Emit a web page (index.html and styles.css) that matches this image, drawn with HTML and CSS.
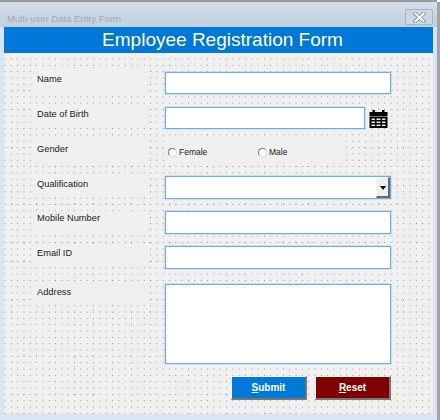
FILE: index.html
```html
<!DOCTYPE html>
<html lang="en">
<head>
  <meta charset="UTF-8">
  <title>Employee Registration Form</title>
  <link rel="stylesheet" href="styles.css">
</head>
<body>

  <div class="window">
    <div class="titlebar">
      <span class="window-title">Multi-user Data Entry Form</span>
      <button class="btn-close" type="button" aria-label="Close">
        <svg width="13" height="11" viewBox="0 0 13 11">
          <path d="M2 1.5 L11 9.5 M11 1.5 L2 9.5" stroke="#7f8a98" stroke-width="3.6" stroke-linecap="square" fill="none"/>
          <path d="M2 1.5 L11 9.5 M11 1.5 L2 9.5" stroke="#fff" stroke-width="2" stroke-linecap="square" fill="none"/>
        </svg>
      </button>
    </div>

    <h1 class="banner">Employee Registration Form</h1>

    <form class="panel">
      <div class="row">
        <label class="field-label">Name</label>
        <input class="text-input offset-2" type="text">
      </div>

      <div class="row">
        <label class="field-label">Date of Birth</label>
        <input class="text-input offset-2 short" type="text">
        <svg class="calendar" width="19" height="19" viewBox="0 0 19 19">
          <path d="M0.5 3 H18.5 V7 H0.5 Z" fill="#000"/>
          <path d="M3.5 1 H6 V4 H3.5 Z M13 1 H15.5 V4 H13 Z" fill="#000"/>
          <path d="M0.5 7.5 H18.5 V19 H0.5 Z" fill="#000"/>
          <path d="M2.5 9.5 H6 V11 H2.5 Z M7.5 9.5 H11.5 V11 H7.5 Z M13 9.5 H16.5 V11 H13 Z M2.5 12.5 H6 V14 H2.5 Z M7.5 12.5 H11.5 V14 H7.5 Z M13 12.5 H16.5 V14 H13 Z M2.5 15.5 H6 V17 H2.5 Z M7.5 15.5 H11.5 V17 H7.5 Z M13 15.5 H16.5 V17 H13 Z" fill="#e8e8e8"/>
        </svg>
      </div>

      <div class="row row-gender">
        <label class="field-label">Gender</label>
        <div class="radio-group">
          <label class="radio"><input type="radio" name="gender">Female</label>
          <label class="radio"><input type="radio" name="gender">Male</label>
        </div>
      </div>

      <div class="row">
        <label class="field-label thin first-thin">Qualification</label>
        <div class="combo">
          <button class="combo-btn" type="button" aria-label="Open"></button>
        </div>
      </div>

      <div class="row">
        <label class="field-label thin">Mobile Number</label>
        <input class="text-input tall" type="text">
      </div>

      <div class="row">
        <label class="field-label thin">Email ID</label>
        <input class="text-input tall" type="text">
      </div>

      <div class="row address-row">
        <label class="field-label address-label">Address</label>
        <textarea class="text-input address"></textarea>
      </div>

      <div class="actions">
        <button class="btn btn-submit" type="button"><u>S</u>ubmit</button>
        <button class="btn btn-reset" type="button"><u>R</u>eset</button>
      </div>
    </form>
  </div>

</body>
</html>
```

FILE: styles.css
```css
html, body {
  margin: 0;
  height: 420px;
  overflow: hidden;
  background: #fff;
}

body {
  font-family: "Liberation Sans", Arial, sans-serif;
  font-size: 9.3px;
  color: #222;
}

.window {
  box-sizing: border-box;
  width: 437px;
  height: 420px;
  margin-top: 2px;
  padding: 0 4px;
  background: #d9e5f2;
  box-shadow: 0 -2px 0 #9a9a9a, 3px 0 0 #a4a4a4;
}

.titlebar {
  display: flex;
  align-items: center;
  justify-content: space-between;
  height: 25px;
  margin: 0 -4px;
  padding: 0 4px 0 7px;
  background: linear-gradient(#d4deea, #c0cfdf);
}

.window-title {
  color: #a0a9b4;
  font-size: 9.5px;
  margin-top: 7px;
}

.btn-close {
  display: flex;
  align-items: center;
  justify-content: center;
  box-sizing: border-box;
  width: 28px;
  height: 16px;
  margin-top: 5px;
  padding: 0;
  background: #ccd7e4;
  border: 1px solid #a6b3c4;
  border-radius: 2px;
}

.banner {
  box-sizing: border-box;
  height: 26px;
  margin: 0;
  padding-left: 8px;
  background: #0078d7;
  color: #ffffcc;
  font-size: 19px;
  font-weight: normal;
  line-height: 25px;
  text-align: center;
}

.panel {
  box-sizing: border-box;
  height: 361px;
  padding-top: 17px;
  background-color: #f0f0f0;
  background-image: radial-gradient(circle, #8c8c8c 0.5px, transparent 0.8px);
  background-size: 6.33px 6.33px;
  background-position: -2.2px 2.8px;
}

.row {
  display: flex;
  align-items: flex-start;
  height: 35px;
  padding-left: 28px;
}

.row-gender {
  height: 36px;
}

.field-label {
  box-sizing: border-box;
  flex: none;
  width: 114px;
  height: 23px;
  margin-right: 19px;
  padding: 2px 0 0 5px;
  background: #f0f0f0;
  line-height: 14px;
}

.field-label.thin {
  height: 20px;
  padding-top: 0;
}

.field-label.first-thin {
  padding-top: 1px;
}

.text-input {
  box-sizing: border-box;
  display: block;
  width: 226px;
  height: 22px;
  margin: 0;
  padding: 0;
  background: #fff;
  border: 1px solid #6db0e8;
  box-shadow: 0 0 0 0.5px #a9d0f0;
  border-radius: 0;
  outline: none;
  resize: none;
}

.offset-2 {
  margin-top: 2px;
}

.short {
  width: 200px;
}

.tall {
  height: 23px;
}

.calendar {
  flex: none;
  margin: 4px 0 0 4px;
}

.radio-group {
  display: flex;
  width: 180px;
  height: 23px;
  background: #f0f0f0;
}

.radio {
  display: flex;
  align-items: center;
  width: 92px;
  padding: 1px 0 0 3px;
  box-sizing: border-box;
  height: 23px;
  font-size: 8.5px;
}

.radio input {
  appearance: none;
  box-sizing: border-box;
  flex: none;
  width: 9px;
  height: 9px;
  margin: 0 2px 0 0;
  background: #fff;
  border: 1px solid;
  border-color: #777 #ddd #ddd #777;
  border-radius: 50%;
}

.combo {
  box-sizing: border-box;
  display: flex;
  justify-content: flex-end;
  width: 226px;
  height: 23px;
  background: #fff;
  border: 1px solid #6db0e8;
  box-shadow: 0 0 0 0.5px #a9d0f0;
}

.combo-btn {
  position: relative;
  box-sizing: border-box;
  width: 14px;
  height: 21px;
  padding: 0;
  background: #f0f0f0;
  border: 1px solid;
  border-color: #f8f8f8 #666 #666 #f8f8f8;
  border-width: 1px 2px 2px 1px;
}

.combo-btn::after {
  content: "";
  position: absolute;
  left: 3px;
  top: 8px;
  border: 3.5px solid transparent;
  border-top: 4px solid #000;
  border-bottom: 0;
}

.address-row {
  height: 92px;
}

.field-label.address-label {
  height: 23px;
  padding-top: 4px;
}

.address {
  height: 80px;
  margin-top: 3px;
}

.actions {
  display: flex;
  gap: 8px;
  margin-top: 3px;
  padding-left: 227px;
}

.btn {
  box-sizing: border-box;
  width: 76px;
  height: 24px;
  padding: 0;
  border: solid;
  border-width: 1px 2px 2px 1px;
  border-color: #f4f4f4 #777 #777 #f4f4f4;
  color: #fff;
  font-family: "Liberation Sans", Arial, sans-serif;
  font-size: 10px;
  font-weight: bold;
}

.btn-submit {
  background: #0078d7;
}

.btn-reset {
  background: #800000;
}
```
